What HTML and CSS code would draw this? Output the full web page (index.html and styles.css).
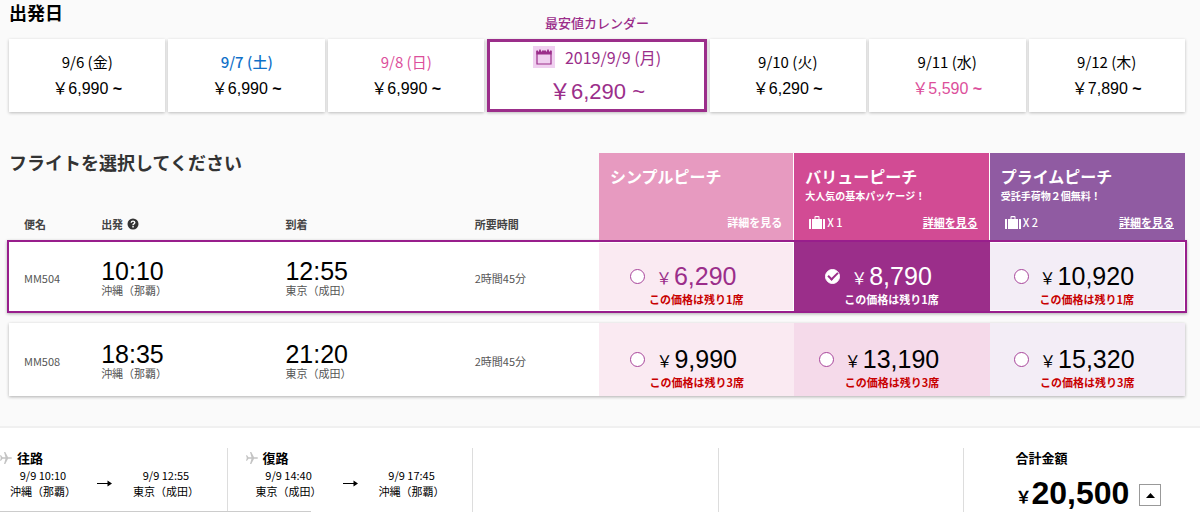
FILE: index.html
```html
<!DOCTYPE html>
<html lang="ja">
<head>
    <meta charset="UTF-8">
    <meta name="viewport" content="width=device-width, initial-scale=1.0">
    <title>フライト選択</title>
    <link rel="stylesheet" href="styles.css">
</head>
<body>
    <main>
        <!-- Departure date -->
        <section class="dates">
            <div class="dates-head">
                <h2>出発日</h2>
                <a class="calendar-link" href="#calendar">最安値カレンダー</a>
            </div>
            <div class="date-list">
                <button class="date"><span class="day">9/6 (金)</span><span class="fare">￥6,990 <b>~</b></span></button>
                <button class="date"><span class="day saturday">9/7 (土)</span><span class="fare">￥6,990 <b>~</b></span></button>
                <button class="date"><span class="day sunday">9/8 (日)</span><span class="fare">￥6,990 <b>~</b></span></button>
                <button class="date current" id="calendar">
                    <span class="day">
                        <svg class="calendar-icon" viewBox="0 0 22 22" aria-hidden="true">
                            <rect width="22" height="22" fill="#f0d0f0"/>
                            <path d="M4 5.500h14v12.500H4z" fill="none" stroke="#9b2e8a" stroke-width="1.200"/>
                            <path d="M3.400 4.500h15.200V8.500H3.400z" fill="#9b2e8a"/>
                            <path d="M5.500 3v2.500M8.500 3v2.500M13.500 3v2.500M16.500 3v2.500" stroke="#f0d0f0" stroke-width="1"/>
                            <path d="M7 3.500v3M15 3.500v3" stroke="#9b2e8a" stroke-width="1.500"/>
                        </svg>
                        2019/9/9 (月)
                    </span>
                    <span class="fare">￥6,290 ~</span>
                </button>
                <button class="date"><span class="day">9/10 (火)</span><span class="fare">￥6,290 <b>~</b></span></button>
                <button class="date"><span class="day">9/11 (水)</span><span class="fare lowest">￥5,590 <b>~</b></span></button>
                <button class="date"><span class="day">9/12 (木)</span><span class="fare">￥7,890 <b>~</b></span></button>
            </div>
        </section>

        <!-- Flights -->
        <table class="flights">
            <thead>
                <tr>
                    <td class="flights-title" colspan="4"><h2>フライトを選択してください</h2></td>
                    <th class="plan simple" rowspan="2">
                        <div class="plan-name">シンプルピーチ</div>
                        <div class="plan-foot"><a class="plain" href="#simple">詳細を見る</a></div>
                    </th>
                    <th class="plan value" rowspan="2">
                        <div class="plan-name">バリューピーチ</div>
                        <div class="plan-note">大人気の基本パッケージ！</div>
                        <div class="plan-foot">
                            <span class="bags">
                                <svg viewBox="0 0 16 13" aria-hidden="true"><path d="M0 3.500Q0 3 .500 3H2v10H.500Q0 13 0 12.500zM3 3h2.500V1q0-1 1-1h3q1 0 1 1v2H13v10H3zM6.500 3h3V1.200h-3zM14 3h1.500q.500 0 .500.500v9q0 .500-.500.500H14z" fill="#fff" fill-rule="evenodd"/></svg>
                                X 1
                            </span>
                            <a href="#value">詳細を見る</a>
                        </div>
                    </th>
                    <th class="plan prime" rowspan="2">
                        <div class="plan-name">プライムピーチ</div>
                        <div class="plan-note">受託手荷物２個無料！</div>
                        <div class="plan-foot">
                            <span class="bags">
                                <svg viewBox="0 0 16 13" aria-hidden="true"><path d="M0 3.500Q0 3 .500 3H2v10H.500Q0 13 0 12.500zM3 3h2.500V1q0-1 1-1h3q1 0 1 1v2H13v10H3zM6.500 3h3V1.200h-3zM14 3h1.500q.500 0 .500.500v9q0 .500-.500.500H14z" fill="#fff" fill-rule="evenodd"/></svg>
                                X 2
                            </span>
                            <a href="#prime">詳細を見る</a>
                        </div>
                    </th>
                </tr>
                <tr>
                    <th class="label">便名</th>
                    <th class="label">出発
                        <svg class="help-icon" viewBox="0 0 12 12" aria-hidden="true">
                            <circle cx="6" cy="6" r="5.500" fill="#333"/>
                            <path d="M4.200 4.700Q4.300 3.100 6 3.100T7.800 4.600Q7.800 5.300 6.900 5.900 6 6.400 6 7.200" fill="none" stroke="#fff" stroke-width="1.400"/>
                            <path d="M5.300 8h1.500v1.400H5.300z" fill="#fff"/>
                        </svg>
                    </th>
                    <th class="label">到着</th>
                    <th class="label">所要時間</th>
                </tr>
            </thead>
            <tbody>
                <tr class="selected">
                    <td class="number">MM504</td>
                    <td><div class="time">10:10</div><div class="place">沖縄（那覇）</div></td>
                    <td><div class="time">12:55</div><div class="place">東京（成田）</div></td>
                    <td class="number">2時間45分</td>
                    <td class="price simple">
                        <label class="cheapest"><input type="radio" name="fare"><span class="yen">￥</span>6,290</label>
                        <div class="seats">この価格は残り1席</div>
                    </td>
                    <td class="price value chosen">
                        <label><input type="radio" name="fare" checked><span class="yen">￥</span>8,790</label>
                        <div class="seats">この価格は残り1席</div>
                    </td>
                    <td class="price prime">
                        <label><input type="radio" name="fare"><span class="yen">￥</span>10,920</label>
                        <div class="seats">この価格は残り1席</div>
                    </td>
                </tr>
                <tr>
                    <td class="number">MM508</td>
                    <td><div class="time">18:35</div><div class="place">沖縄（那覇）</div></td>
                    <td><div class="time">21:20</div><div class="place">東京（成田）</div></td>
                    <td class="number">2時間45分</td>
                    <td class="price simple">
                        <label><input type="radio" name="fare"><span class="yen">￥</span>9,990</label>
                        <div class="seats">この価格は残り3席</div>
                    </td>
                    <td class="price value">
                        <label><input type="radio" name="fare"><span class="yen">￥</span>13,190</label>
                        <div class="seats">この価格は残り3席</div>
                    </td>
                    <td class="price prime">
                        <label><input type="radio" name="fare"><span class="yen">￥</span>15,320</label>
                        <div class="seats">この価格は残り3席</div>
                    </td>
                </tr>
            </tbody>
        </table>
    </main>

    <!-- Booking summary -->
    <footer class="summary">
        <div class="leg">
            <h3>
                <svg class="plane" viewBox="0 0 12 12" aria-hidden="true"><path d="M0 3.200h1l1.500 2h3L4 0h1.300L8 5.200h3q1 .200 1 .800t-1 .800H8L5.300 12H4l1.500-5.200h-3l-1.500 2H0L.800 6z" fill="#c4c4c4"/></svg>
                往路
            </h3>
            <div class="route">
                <div class="stop">9/9 10:10<br>沖縄（那覇）</div>
                <svg class="arrow" viewBox="0 0 15 7" aria-hidden="true"><path d="M0 3h11v1H0zM10.500.500L15 3.500l-4.500 3z"/></svg>
                <div class="stop">9/9 12:55<br>東京（成田）</div>
            </div>
        </div>
        <div class="leg">
            <h3>
                <svg class="plane" viewBox="0 0 12 12" aria-hidden="true"><path d="M0 3.200h1l1.500 2h3L4 0h1.300L8 5.200h3q1 .200 1 .800t-1 .800H8L5.300 12H4l1.500-5.200h-3l-1.500 2H0L.800 6z" fill="#c4c4c4"/></svg>
                復路
            </h3>
            <div class="route">
                <div class="stop">9/9 14:40<br>東京（成田）</div>
                <svg class="arrow" viewBox="0 0 15 7" aria-hidden="true"><path d="M0 3h11v1H0zM10.500.500L15 3.500l-4.500 3z"/></svg>
                <div class="stop">9/9 17:45<br>沖縄（那覇）</div>
            </div>
        </div>
        <div class="leg"></div>
        <div class="leg"></div>
        <div class="total">
            <h3>合計金額</h3>
            <div class="amount">
                <span class="yen">￥</span>20,500
                <button class="toggle" aria-label="明細"><svg viewBox="0 0 9 5" aria-hidden="true"><path d="M0 5L4.500 0 9 5z"/></svg></button>
            </div>
        </div>
        <div class="scroll-thumb"></div>
    </footer>
</body>
</html>
```
FILE: styles.css
```css
* {
    box-sizing: border-box;
}

body {
    margin: 0;
    min-height: 100vh;
    display: flex;
    flex-direction: column;
    background-color: #fafafa;
    color: #000;
    font-family: "Noto Sans CJK JP", sans-serif;
    font-size: 11px;
    line-height: 16px;
}

h2, h3 {
    margin: 0;
}

h2 {
    font-size: 18px;
    line-height: 24px;
}

button {
    font: inherit;
    color: inherit;
    cursor: pointer;
}

main {
    padding: 0 15px 30px 9px;
}

/* Dates */
.dates-head {
    display: grid;
    grid-template-columns: 1fr auto 1fr;
    align-items: start;
    height: 39px;
}

.calendar-link {
    padding-top: 13px;
    color: #9b2e8a;
    font-size: 13px;
    font-weight: 500;
    line-height: 20px;
    text-decoration: none;
}

.date-list {
    display: grid;
    grid-template-columns: 1fr 1fr 1fr 1.4fr 1fr 1fr 1fr;
    gap: 3px;
}

.date {
    display: flex;
    flex-direction: column;
    align-items: center;
    height: 73px;
    padding: 9px 0 0;
    border: 0;
    background-color: #fff;
    box-shadow: 0 1px 3px rgba(0, 0, 0, 0.25);
}

.day {
    display: flex;
    align-items: center;
    gap: 10px;
    font-size: 15px;
    line-height: 27px;
}

.fare {
    font-family: "Liberation Sans", "Noto Sans CJK JP", sans-serif;
    font-size: 16px;
    line-height: 27px;
}

.saturday {
    color: #1070c8;
    font-weight: 500;
}

.sunday, .lowest {
    color: #dc4f9b;
}

.date.current {
    padding-top: 0;
    border: 3px solid #9b2e8a;
    color: #9b2e8a;
}

.current .day {
    font-size: 16px;
    line-height: 30px;
}

.current .fare {
    font-size: 22px;
    line-height: 40px;
}

.calendar-icon {
    width: 22px;
    height: 22px;
}

/* Flights */
.flights {
    display: block;
    margin-top: 41px;
}

.flights tbody {
    display: block;
}

.flights thead, .flights tbody tr {
    display: grid;
    grid-template-columns: 77fr 184fr 189fr 139fr 195fr 195fr 195fr;
}

.flights thead {
    grid-template-rows: 60px 27px;
}

.flights thead tr {
    display: contents;
}

.flights th, .flights td {
    padding: 0;
    min-width: 0;
    text-align: left;
}

.flights .flights-title {
    grid-row: 1;
    grid-column: 1 / 5;
    color: #333;
}

.flights h2 {
    line-height: 18px;
}

.flights .label {
    grid-row: 2;
    display: flex;
    align-items: center;
    gap: 4px;
    padding: 0 0 5px 15px;
    color: #444;
    line-height: 16px;
}

.help-icon {
    width: 12px;
    height: 12px;
}

.flights .plan {
    grid-row: 1 / 3;
    display: flex;
    flex-direction: column;
    padding: 11px 11px 10px;
    border-right: 1px solid #fff;
    color: #fff;
}

.flights .plan.simple {
    grid-column: 5;
}

.flights .plan.value {
    grid-column: 6;
}

.flights .plan.prime {
    grid-column: 7;
    border-right: 0;
}

.plan.simple {
    background-color: #e79ac0;
}

.plan.value {
    background-color: #d24b94;
}

.plan.prime {
    background-color: #905ba2;
}

.plan-name {
    font-size: 16px;
    line-height: 24px;
}

.plan-note {
    font-size: 10px;
    line-height: 15px;
}

.plan-foot {
    display: flex;
    align-items: center;
    justify-content: space-between;
    margin-top: auto;
}

.plan-foot a {
    margin-left: auto;
    color: #fff;
}

.plan-foot .plain {
    text-decoration: none;
}

.bags {
    display: flex;
    align-items: center;
    gap: 2px;
    padding-left: 4px;
    font-weight: 500;
}

.bags svg {
    width: 16px;
    height: 13px;
}

.flights tbody tr {
    height: 73px;
    margin-bottom: 10px;
    background-color: #fff;
    box-shadow: 0 1px 3px rgba(0, 0, 0, 0.3);
}

.flights tbody tr.selected {
    margin-right: -2px;
    margin-left: -2px;
    border: 2px solid #981e8c;
}

.flights tbody tr:last-child {
    margin-bottom: 0;
}

.flights tbody td {
    display: flex;
    flex-direction: column;
    justify-content: center;
    padding-top: 2px;
    padding-left: 15px;
}

.number, .place {
    color: #555;
}

.time {
    font-family: "Liberation Sans", sans-serif;
    font-size: 25px;
    line-height: 24px;
}

.place {
    line-height: 14px;
}

.flights tbody .price {
    align-items: center;
    padding: 15px 0 0;
}

.selected .price {
    border: 1px solid #fff;
    border-left: 0;
}

.price.simple {
    background-color: #faeaf2;
}

.price.value {
    background-color: #f5daea;
}

.price.prime {
    background-color: #f3edf6;
}

.price label {
    display: flex;
    align-items: center;
    padding-right: 26px;
    font-family: "Liberation Sans", "Noto Sans CJK JP", sans-serif;
    font-size: 25px;
    line-height: 30px;
}

.price input {
    appearance: none;
    width: 15px;
    height: 15px;
    margin: 0 11px 0 0;
    border: 1px solid #a8459b;
    border-radius: 50%;
    background-color: #fff;
}

.yen {
    font-size: 16px;
    line-height: 16px;
}

.price .yen {
    padding: 6px 2px 0 0;
}

.price .cheapest {
    color: #9b2e8a;
}

.seats {
    color: #c80000;
    font-weight: bold;
}

.price.chosen {
    border-color: #9b2e8a;
    background-color: #9b2e8a;
    color: #fff;
}

.chosen .seats {
    color: #fff;
}

.chosen input {
    display: grid;
    place-items: center;
    border-color: #fff;
}

.chosen input::before {
    content: "";
    width: 8px;
    height: 4px;
    margin-bottom: 3px;
    border: solid #9b2e8a;
    border-width: 0 0 2px 2px;
    transform: rotate(-45deg);
}

/* Summary */
.summary {
    flex: 1;
    position: relative;
    display: grid;
    grid-template-columns: repeat(4, 246fr) 236fr;
    padding-top: 20px;
    margin-left: -18px;
    border-top: 2px solid #f0f0f0;
    background-color: #fff;
}

.leg {
    padding-left: 18px;
    border-right: 1px solid #ddd;
}

h3 {
    display: flex;
    align-items: center;
    gap: 5px;
    font-size: 13px;
    line-height: 19px;
}

.plane {
    width: 12px;
    height: 12px;
}

.route {
    display: flex;
    align-items: center;
    gap: 21px;
    padding-left: 10px;
}

.stop {
    text-align: center;
    white-space: nowrap;
}

.arrow {
    width: 15px;
    height: 7px;
}

.total {
    padding-left: 51px;
}

.amount {
    display: flex;
    align-items: center;
    font-family: "Liberation Sans", "Noto Sans CJK JP", sans-serif;
    font-size: 32px;
    font-weight: bold;
    line-height: 36px;
    padding-top: 8px;
}

.amount .yen {
    padding-top: 10px;
}

.toggle {
    display: grid;
    place-items: center;
    width: 22px;
    height: 22px;
    margin: 4px 0 0 10px;
    padding: 0;
    border: 1px solid #999;
    background-color: #fff;
}

.toggle svg {
    width: 9px;
    height: 5px;
}

.scroll-thumb {
    position: absolute;
    bottom: 0;
    left: 0;
    width: 27%;
    height: 1px;
    background-color: #ccc;
}
```
